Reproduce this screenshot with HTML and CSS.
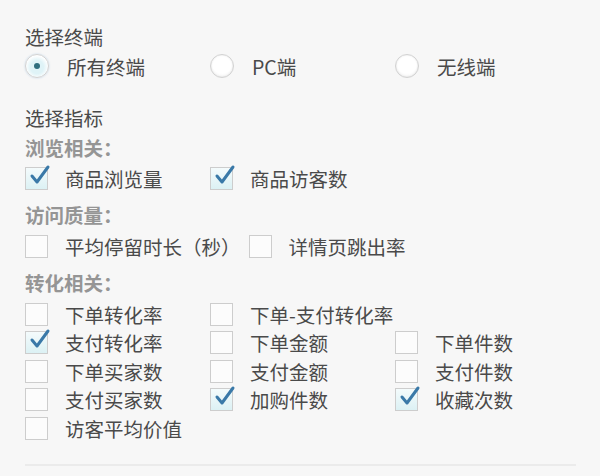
FILE: index.html
```html
<!DOCTYPE html>
<html lang="zh-CN">
<head>
    <meta charset="UTF-8">
    <title>选择指标</title>
    <link rel="stylesheet" href="styles.css">
</head>
<body>
    <div class="panel">
        <div class="title">选择终端</div>
        <div class="options">
            <label class="item"><span class="radio selected"></span>所有终端</label>
            <label class="item"><span class="radio"></span>PC端</label>
            <label class="item"><span class="radio"></span>无线端</label>
        </div>

        <div class="title metrics">选择指标</div>

        <div class="group-label">浏览相关：</div>
        <div class="options">
            <label class="item"><span class="box checked"><svg viewBox="0 0 24 24"><path d="M5 13 L10 19 L21 4"/></svg></span>商品浏览量</label>
            <label class="item"><span class="box checked"><svg viewBox="0 0 24 24"><path d="M5 13 L10 19 L21 4"/></svg></span>商品访客数</label>
        </div>

        <div class="group-label">访问质量：</div>
        <div class="options">
            <label class="item"><span class="box"></span>平均停留时长（秒）</label>
            <label class="item"><span class="box"></span>详情页跳出率</label>
        </div>

        <div class="group-label">转化相关：</div>
        <div class="options">
            <label class="item"><span class="box"></span>下单转化率</label>
            <label class="item"><span class="box"></span>下单-支付转化率</label>
            <span class="break"></span>
            <label class="item"><span class="box checked"><svg viewBox="0 0 24 24"><path d="M5 13 L10 19 L21 4"/></svg></span>支付转化率</label>
            <label class="item"><span class="box"></span>下单金额</label>
            <label class="item"><span class="box"></span>下单件数</label>
            <label class="item"><span class="box"></span>下单买家数</label>
            <label class="item"><span class="box"></span>支付金额</label>
            <label class="item"><span class="box"></span>支付件数</label>
            <label class="item"><span class="box"></span>支付买家数</label>
            <label class="item"><span class="box checked"><svg viewBox="0 0 24 24"><path d="M5 13 L10 19 L21 4"/></svg></span>加购件数</label>
            <label class="item"><span class="box checked"><svg viewBox="0 0 24 24"><path d="M5 13 L10 19 L21 4"/></svg></span>收藏次数</label>
            <label class="item"><span class="box"></span>访客平均价值</label>
        </div>

        <div class="divider"></div>
    </div>
</body>
</html>
```

FILE: styles.css
```css
body {
    margin: 0;
    background-color: #f7f7f7;
    font-family: "Noto Sans CJK SC", "Microsoft YaHei", sans-serif;
    font-size: 19.5px;
    color: #4a4a4a;
}
.panel {
    padding: 22px 0 0 25px;
}
.title {
    height: 30px;
    line-height: 30px;
}
.title.metrics {
    margin-top: 22px;
}
.group-label {
    height: 30px;
    line-height: 30px;
    margin-top: 7px;
    color: #959595;
    font-weight: bold;
}
.title + .group-label {
    margin-top: 0;
}
.options {
    display: flex;
    flex-wrap: wrap;
    width: 560px;
    margin-top: 2px;
}
.title + .options {
    margin-top: 0;
}
.item {
    display: flex;
    align-items: center;
    min-width: 185px;
    height: 28.6px;
    padding-right: 8px;
    box-sizing: border-box;
    white-space: nowrap;
}
.break {
    flex-basis: 100%;
    height: 0;
}
.box {
    position: relative;
    width: 21px;
    height: 21px;
    margin-right: 17px;
    border: 1px solid #cdcdcd;
    background-color: #fcfcfc;
    flex-shrink: 0;
}
.box.checked {
    background: linear-gradient(#f4fbfc, #dcf1f4);
}
.box svg {
    position: absolute;
    left: 1px;
    top: -5px;
    width: 24px;
    height: 24px;
    fill: none;
    stroke: #3a79a8;
    stroke-width: 3;
    stroke-linecap: round;
    stroke-linejoin: round;
}
.radio {
    width: 22px;
    height: 22px;
    margin-right: 18px;
    border: 1px solid #d2d2d2;
    border-radius: 50%;
    background: radial-gradient(circle at 50% 40%, #ffffff 55%, #ececec 100%);
    box-shadow: inset 0 0 2px rgba(0, 0, 0, 0.12);
    flex-shrink: 0;
    display: flex;
    align-items: center;
    justify-content: center;
}
.radio.selected {
    background: radial-gradient(circle at 50% 55%, #dff3f7 40%, #ffffff 70%);
    box-shadow: 0 0 2px rgba(90, 150, 200, 0.35);
}
.radio.selected::after {
    content: "";
    width: 6px;
    height: 6px;
    border-radius: 50%;
    background-color: #2f6e7e;
}
.divider {
    margin-top: 21px;
    width: 551px;
    height: 2px;
    background-color: #ebebeb;
}
```
